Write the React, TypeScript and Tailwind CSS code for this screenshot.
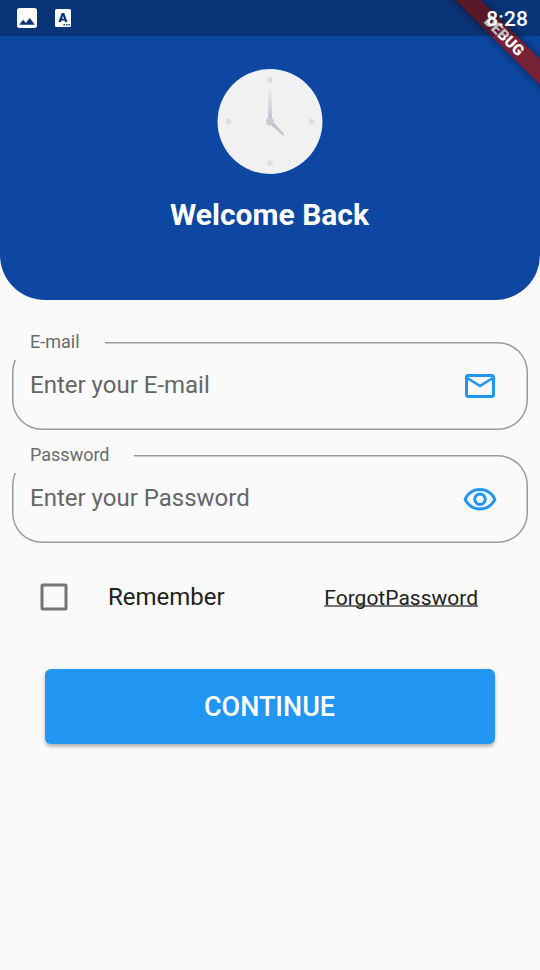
import type { ReactNode } from "react";

const roboto = "font-['Roboto','Liberation_Sans',sans-serif]";

function StatusBar() {
  return (
    <div className="absolute inset-x-0 top-0 z-20 flex h-9 items-center bg-black/25 pl-[17px] pr-3">
      <svg className="size-5" viewBox="3 3 18 18" fill="#fff">
        <path d="M21 19V5c0-1.1-.9-2-2-2H5c-1.1 0-2 .9-2 2v14c0 1.1.9 2 2 2h14c1.1 0 2-.9 2-2zM8.5 13.5l2.5 3.01L14.5 12l4.5 6H5l3.5-4.5z" />
      </svg>
      <svg className="ml-[18px] h-[18px] w-4" viewBox="0 0 16 18">
        <rect width="16" height="18" rx="1.5" fill="#fff" />
        <path
          d="M6.7 4h2.6l3.2 9H10l-.5-1.6h-3L6 13H3.500zM8 6.700 7.100 9.700h1.800z"
          fill="#0a3576"
          fillRule="evenodd"
        />
        <path d="M8.500 15h1.400v1.400H8.500zM11 15h1.400v1.400H11zM13.400 15h1.400v1.400h-1.400z" fill="#0a3576" />
      </svg>
      <span className="ml-auto mt-[2px] text-[21px] font-medium leading-9 tracking-[0.1px] text-white">8:28</span>
    </div>
  );
}

function DebugBanner() {
  return (
    <div className="pointer-events-none absolute right-0 top-0 z-10 size-[130px] overflow-hidden">
      <div className="absolute left-[14px] top-[27px] h-[18px] w-[160px] rotate-45 bg-black/40 shadow-[0_0_10px_rgba(0,0,0,0.5)]">
        <div className="flex h-full items-center justify-center bg-[#b71c1c]/63 text-[15.3px] font-black leading-[18px] text-white">
          DEBUG
        </div>
      </div>
    </div>
  );
}

function Clock() {
  return (
    <svg className="h-[105px] w-[106px]" viewBox="0 0 106 105">
      <defs>
        <linearGradient id="minute" x1="0" y1="18" x2="0" y2="52" gradientUnits="userSpaceOnUse">
          <stop offset="0" stopColor="#f1f1f1" />
          <stop offset="1" stopColor="#b4bfc9" />
        </linearGradient>
      </defs>
      <circle cx="53" cy="52.5" r="52.5" fill="#d3e3f3" />
      <circle cx="53" cy="52.5" r="52" fill="#f1f1f1" />
      <circle cx="53" cy="11" r="2.8" fill="#dcdcdd" />
      <circle cx="53" cy="94" r="2.8" fill="#dcdcdd" />
      <circle cx="11.5" cy="52.5" r="2.8" fill="#dcdcdd" />
      <circle cx="94.5" cy="52.5" r="2.8" fill="#dcdcdd" />
      <path d="M51.500 18h3L55 52.500h-4z" fill="url(#minute)" />
      <path d="m54.500 51 13 14.500-1.200 1.200L51.500 54z" fill="#bec6cd" />
      <circle cx="53" cy="52.500" r="4" fill="#c2cdd5" />
    </svg>
  );
}

function Field({ label, hint, gap, children }: { label: string; hint: string; gap: string; children: ReactNode }) {
  return (
    <div className="relative flex h-[88px] items-center justify-between rounded-[30px] pl-[18px] pr-[30px] shadow-[inset_0_0_0_1.5px_#9b9b9b]">
      <div className={`absolute -top-[11px] left-0 h-[29px] bg-[#fafafa] pl-[18px] text-[18px] leading-[21px] text-[#6b6b6b] ${gap}`}>
        {label}
      </div>
      <span className="-mt-[2px] text-[24px] leading-[28px] text-[#666]">{hint}</span>
      {children}
    </div>
  );
}

export default function App() {
  return (
    <div className={`relative h-[970px] w-[540px] overflow-hidden bg-[#fafafa] ${roboto}`}>
      <StatusBar />
      <DebugBanner />
      <header className="flex h-[300px] flex-col items-center rounded-b-[45px] bg-[#0d47a1] pt-[69px]">
        <Clock />
        <h1 className="mr-px mt-[23px] text-[30px] font-bold leading-[36px] text-white">Welcome Back</h1>
      </header>
      <main className="flex flex-col">
        <div className="mt-[42px] flex flex-col gap-[25px] px-3">
          <Field label="E-mail" hint="Enter your E-mail" gap="w-[93px]">
            <svg className="size-9" viewBox="0 0 24 24" fill="#2196f3">
              <path d="M22 6c0-1.100-.9-2-2-2H4c-1.100 0-2 .9-2 2v12c0 1.100.9 2 2 2h16c1.100 0 2-.9 2-2V6zm-2 0l-8 5-8-5h16zm0 12H4V8l8 5 8-5v10z" />
            </svg>
          </Field>
          <Field label="Password" hint="Enter your Password" gap="w-[122px]">
            <svg className="mt-[2px] size-9" viewBox="0 0 24 24" fill="#2196f3">
              <path d="M12 6c3.790 0 7.170 2.130 8.820 5.500C19.170 14.870 15.790 17 12 17s-7.170-2.130-8.820-5.500C4.830 8.130 8.210 6 12 6m0-2C7 4 2.730 7.110 1 11.500 2.730 15.890 7 19 12 19s9.270-3.110 11-7.500C21.270 7.110 17 4 12 4zm0 5c1.380 0 2.500 1.120 2.500 2.500S13.380 14 12 14s-2.500-1.120-2.500-2.500S10.620 9 12 9m0-2c-2.480 0-4.500 2.020-4.500 4.500S9.520 16 12 16s4.500-2.020 4.500-4.500S14.480 7 12 7z" />
            </svg>
          </Field>
        </div>
        <div className="mt-[31px] flex h-[46px] items-center pl-10">
          <svg className="size-7" viewBox="0 0 28 28">
            <rect x="2" y="2" width="24" height="24" rx="0.5" fill="none" stroke="#757575" strokeWidth="3" />
          </svg>
          <span className="ml-10 text-[24px] leading-7 text-[#212121]">Remember</span>
          <a className="ml-auto mr-[62px] pt-[2px] text-[21px] leading-6 text-[#212121] underline decoration-[#757575] decoration-[1.5px] underline-offset-0 [text-decoration-skip-ink:none]">
            ForgotPassword
          </a>
        </div>
        <button className="mx-[45px] mt-[49px] h-[75px] rounded-[6px] bg-[#2196f3] pr-[7px] pt-[2px] text-[27px] font-medium text-white shadow-[0_3px_3px_rgba(0,0,0,0.2),0_1px_5px_rgba(0,0,0,0.12)]">
          <span className="pl-[6px]">CONTINUE</span>
        </button>
      </main>
    </div>
  );
}
